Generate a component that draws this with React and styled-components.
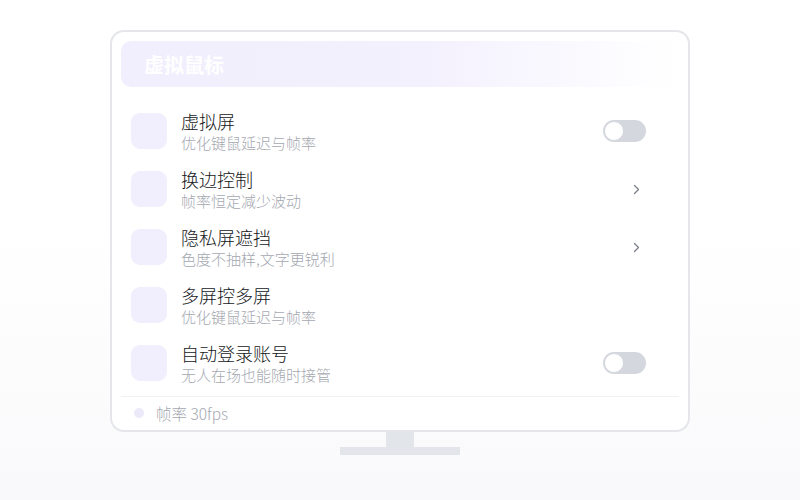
import React from "react"
import styled, { createGlobalStyle } from "styled-components"

const GlobalStyle = createGlobalStyle`
  html, body {
    margin: 0;
    padding: 0;
  }
  body {
    width: 800px;
    height: 500px;
    overflow: hidden;
    font-family: "Noto Sans CJK SC", "Noto Sans", sans-serif;
    background: linear-gradient(180deg, #ffffff 0%, #ffffff 46%, #f9f9fb 100%);
  }
`

const Stage = styled.div`
  width: 800px;
  height: 500px;
  display: flex;
  flex-direction: column;
  align-items: center;
  padding-top: 30px;
  box-sizing: border-box;
`

const Screen = styled.div`
  width: 580px;
  height: 402px;
  box-sizing: border-box;
  border: 2px solid #e4e6ea;
  border-radius: 14px;
  background: #ffffff;
  padding: 9px 9px 0 9px;
  display: flex;
  flex-direction: column;
`

const Header = styled.div`
  height: 46px;
  border-radius: 10px;
  background: linear-gradient(90deg, #f1eefd 0%, #f4f1fe 55%, #ffffff 100%);
  display: flex;
  align-items: center;
  padding-left: 23px;
  color: #ffffff;
  font-size: 20px;
  font-weight: 700;
`

const List = styled.div`
  display: flex;
  flex-direction: column;
  margin-top: 15px;
  padding: 0 33px 0 10px;
`

const Row = styled.div`
  height: 58px;
  display: flex;
  align-items: center;
`

const IconBox = styled.div`
  width: 36px;
  height: 36px;
  border-radius: 9px;
  background: #f1eefd;
  flex-shrink: 0;
`

const Texts = styled.div`
  flex: 1;
  margin-left: 14px;
  display: flex;
  flex-direction: column;
  margin-top: 0;
`

const Title = styled.div`
  font-size: 18px;
  line-height: 24px;
  color: #15171a;
  font-weight: 300;
`

const Sub = styled.div`
  font-size: 15px;
  line-height: 20px;
  color: #a4a8b0;
  font-weight: 300;
`

const Trailing = styled.div`
  width: 43px;
  display: flex;
  justify-content: flex-end;
  align-items: center;
`

const Toggle = styled.div`
  width: 43px;
  height: 22px;
  border-radius: 11px;
  background: #d4d7de;
  position: relative;
  &::after {
    content: "";
    position: absolute;
    left: 1px;
    top: 1px;
    width: 18px;
    height: 18px;
    border-radius: 50%;
    background: #ffffff;
    border: 1px solid #d4d7de;
  }
`

const Chevron = styled.svg`
  margin-right: 6px;
`

const Divider = styled.div`
  height: 1px;
  background: #eef0f3;
  margin-top: 4px;
`

const Footer = styled.div`
  height: 32px;
  display: flex;
  align-items: center;
  padding-left: 13px;
  color: #a4a8b0;
  font-size: 15.5px;
  font-weight: 300;
`

const Dot = styled.span`
  width: 10px;
  height: 10px;
  border-radius: 50%;
  background: #ece9fb;
  margin-right: 12px;
`

const Neck = styled.div`
  width: 28px;
  height: 15px;
  background: #e2e5e9;
`

const Base = styled.div`
  width: 120px;
  height: 8px;
  background: #e2e5e9;
`

const items = [
  { title: "虚拟屏", sub: "优化键鼠延迟与帧率", trail: "toggle" },
  { title: "换边控制", sub: "帧率恒定减少波动", trail: "chevron" },
  { title: "隐私屏遮挡", sub: "色度不抽样,文字更锐利", trail: "chevron" },
  { title: "多屏控多屏", sub: "优化键鼠延迟与帧率", trail: null },
  { title: "自动登录账号", sub: "无人在场也能随时接管", trail: "toggle" },
]

const App = () => (
  <>
    <GlobalStyle />
    <Stage>
      <Screen>
        <Header>虚拟鼠标</Header>
        <List>
          {items.map((item, key) => (
            <Row key={key}>
              <IconBox />
              <Texts>
                <Title>{item.title}</Title>
                <Sub>{item.sub}</Sub>
              </Texts>
              <Trailing>
                {item.trail === "toggle" && <Toggle />}
                {item.trail === "chevron" && (
                  <Chevron width="7" height="11" viewBox="0 0 7 11">
                    <path
                      d="M1.5 1.5 L5.5 5.5 L1.5 9.5"
                      fill="none"
                      stroke="#7b808a"
                      strokeWidth="1.3"
                      strokeLinecap="round"
                      strokeLinejoin="round"
                    />
                  </Chevron>
                )}
              </Trailing>
            </Row>
          ))}
        </List>
        <Divider />
        <Footer>
          <Dot />
          帧率 30fps
        </Footer>
      </Screen>
      <Neck />
      <Base />
    </Stage>
  </>
)

export default App
